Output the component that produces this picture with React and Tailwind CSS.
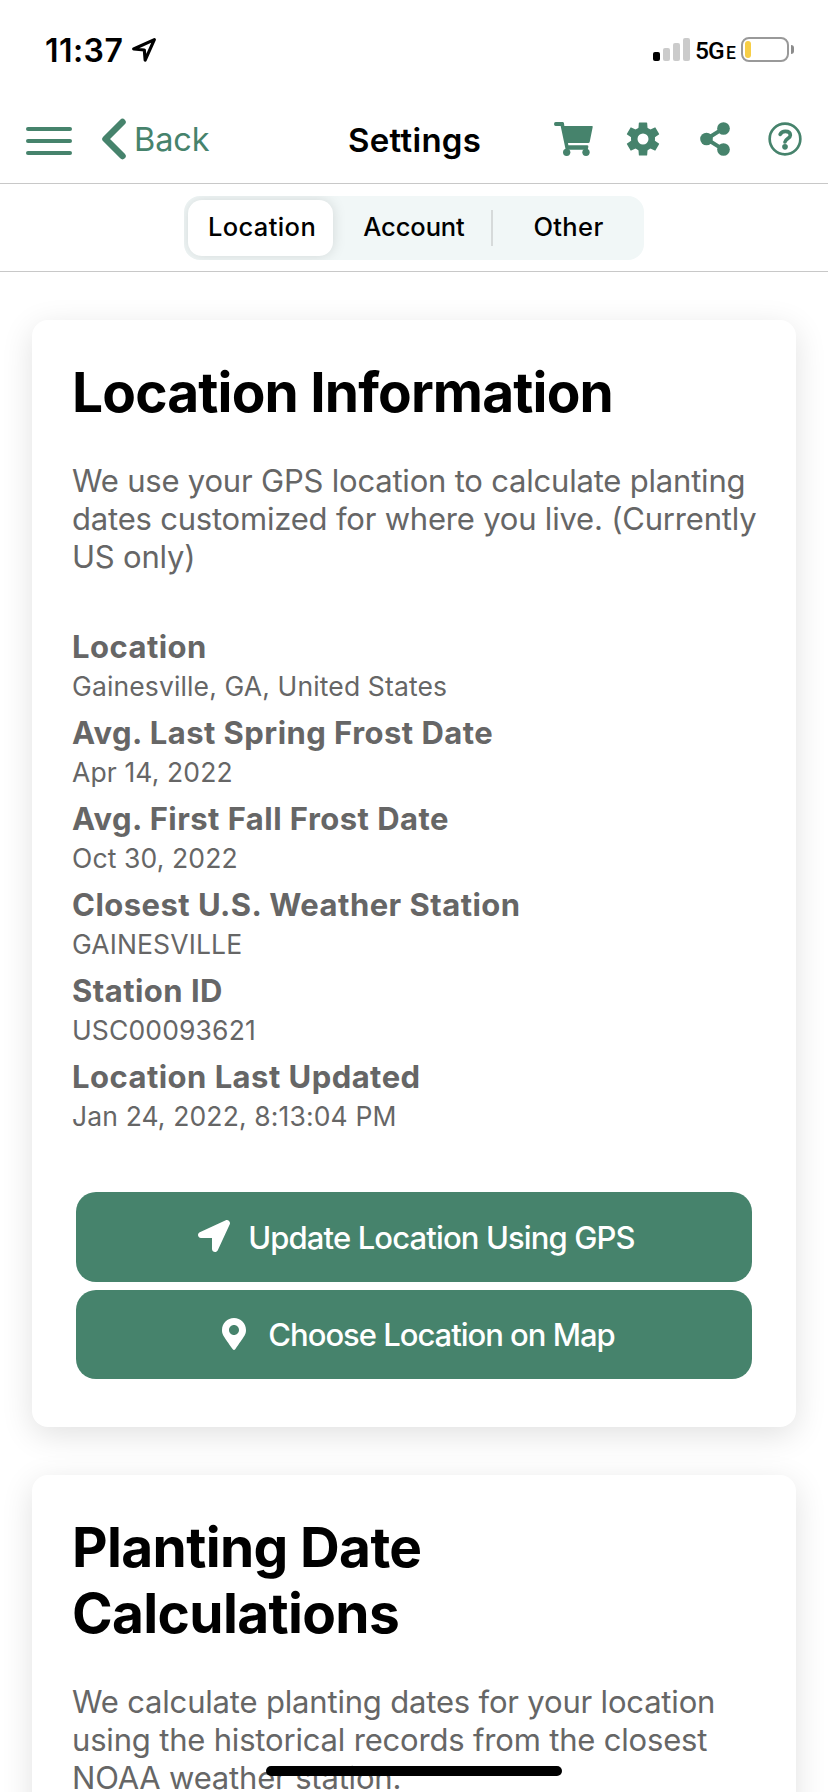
import React from "react";
import { FaLocationArrow, FaMapMarkerAlt } from "react-icons/fa";

const details = [
  ["Location", "Gainesville, GA, United States"],
  ["Avg. Last Spring Frost Date", "Apr 14, 2022"],
  ["Avg. First Fall Frost Date", "Oct 30, 2022"],
  ["Closest U.S. Weather Station", "GAINESVILLE"],
  ["Station ID", "USC00093621"],
  ["Location Last Updated", "Jan 24, 2022, 8:13:04 PM"],
];

function StatusBar() {
  return (
    <div className="flex h-[100px] shrink-0 items-start justify-between pt-[37px] pr-[34px] pl-[45px]">
      <div className="flex items-start">
        <span className="h-6 text-[32px] leading-[27px] font-semibold tracking-[0.44px]">11:37</span>
        <svg className="mt-px ml-[9px] h-6 w-6" viewBox="36 39 72 72" fill="none" stroke="black" strokeWidth="9.500" strokeLinejoin="round">
          <path d="M41 72L103 44L75.500 105.500L73 75Z" />
        </svg>
      </div>
      <div className="flex items-start">
        <div className="flex h-[24px] items-end gap-[3px]">
          <span className="h-[9px] w-[7px] rounded-[2px] bg-black" />
          <span className="h-[13px] w-[7px] rounded-[2px] bg-[#cbcbcb]" />
          <span className="h-[18px] w-[7px] rounded-[2px] bg-[#cbcbcb]" />
          <span className="h-[23px] w-[7px] rounded-[2px] bg-[#cbcbcb]" />
        </div>
        <div className="ml-[5px] flex w-[46px] items-baseline font-['Roboto'] leading-[27px] font-medium">
          <span className="w-[31px] text-[24.5px] tracking-[-0.8px]">5G</span>
          <span className="text-[17.5px]">E</span>
        </div>
        <div className="flex h-[25px] w-12 rounded-[8px] border-2 border-[#999] p-[2px]">
          <span className="w-[6px] rounded-[3px] bg-[#f7ce46]" />
        </div>
        <span className="mt-2 ml-[2px] h-[9px] w-[3px] rounded-r-full bg-[#8c8c8c]" />
      </div>
    </div>
  );
}

function CartIcon() {
  return (
    <svg className="h-[34px] w-[39px]" viewBox="42 51 117 102" fill="currentColor">
      <path d="M47 51H68Q71 51 72 55L73 63H156Q159 63 158 67L149 111Q148 114 145 114H84L85 121H142Q146 121 145 126L143 134H77L62 63H47Q42 63 42 57Q42 51 47 51Z" />
      <circle cx="80" cy="142" r="11" />
      <circle cx="138" cy="142" r="11" />
    </svg>
  );
}

function GearIcon() {
  return (
    <svg className="h-[34px] w-[34px]" viewBox="258.500 51 102 102" fill="currentColor">
      <path
        fillRule="evenodd"
        d="M309.500 66a36 36 0 1 0 0 72a36 36 0 1 0 0-72ZM309.500 85.500a16.500 16.500 0 1 1 0 33a16.500 16.500 0 1 1 0-33Z"
      />
      {[0, 60, 120, 180, 240, 300].map((a) => (
        <path key={a} transform={`rotate(${a} 309.500 102)`} d="M297 54Q297 52.500 299 52.500H320Q322 52.500 322 54L323.500 74H295.500Z" />
      ))}
    </svg>
  );
}

function ShareIcon() {
  return (
    <svg className="h-[34px] w-[30px]" viewBox="480.500 51 90 102" fill="currentColor">
      <path d="M551 70L500 102L551 134" fill="none" stroke="currentColor" strokeWidth="12" />
      <circle cx="551" cy="70.500" r="19" />
      <circle cx="500" cy="102" r="19" />
      <circle cx="551" cy="133.500" r="19" />
    </svg>
  );
}

function HelpIcon() {
  return (
    <svg className="h-[34px] w-[34px]" viewBox="685 51 102 102" fill="none" stroke="currentColor">
      <circle cx="736" cy="102" r="46" strokeWidth="8" />
      <path d="M721.500 88Q726 79 737 79C747 79 752 84 752 91C752 100 738 101 736 111" strokeWidth="11" strokeLinecap="round" />
      <circle cx="736" cy="125.500" r="8.500" fill="currentColor" stroke="none" />
    </svg>
  );
}

function NavBar() {
  return (
    <div className="grid h-[84px] shrink-0 grid-cols-[348px_1fr_274px] border-b border-[#c8c8c8] text-[#46836c]">
      <div className="flex items-start pt-[18px] pl-[26px]">
        <div className="mt-[9px] flex w-[46px] flex-col gap-2">
          <span className="h-1 rounded-full bg-[#46836c]" />
          <span className="h-1 rounded-full bg-[#46836c]" />
          <span className="h-1 rounded-full bg-[#46836c]" />
        </div>
        <svg className="ml-[29px] h-[42px] w-[25px]" viewBox="0 0 25 42" fill="none" stroke="currentColor" strokeWidth="6.500" strokeLinecap="round" strokeLinejoin="round">
          <path d="M21.500 4L4.500 21L21.500 38" />
        </svg>
        <span className="ml-2 pt-px text-[32.5px] leading-[42px] tracking-[-0.1px]">Back</span>
      </div>
      <h1 className="pt-[19px] text-[33px] leading-[42px] font-semibold tracking-[0.3px] text-black">Settings</h1>
      <div className="grid grid-cols-[72px_74px_68px_34px] items-start pt-[22px]">
        <CartIcon />
        <GearIcon />
        <ShareIcon />
        <HelpIcon />
      </div>
    </div>
  );
}

function Tabs() {
  return (
    <div className="flex h-[88px] shrink-0 justify-center border-b border-[#c8c8c8] pt-3">
      <div className="flex h-16 w-[460px] items-center overflow-hidden rounded-2xl bg-[#f1f7f7] pl-1 text-[25.5px] leading-[34px] font-medium">
        <div className="flex h-14 w-[145px] items-center justify-center rounded-[14px] bg-white pb-[3px] pl-[3px] tracking-[0.39px] shadow-[0_0_14px_rgba(0,0,0,0.13)]">Location</div>
        <div className="flex h-9 w-[160px] items-center justify-center border-r-2 border-[#d6dada] pb-[3px] pl-1 tracking-[-0.1px]">Account</div>
        <div className="flex h-9 flex-1 items-center justify-center pb-[3px] tracking-[0.35px]">Other</div>
      </div>
    </div>
  );
}

function Card({ children, className }) {
  return (
    <section className={`shrink-0 rounded-2xl bg-white px-[40px] pt-[39px] shadow-[0_8px_32px_rgba(0,0,0,0.12)] ${className}`}>
      {children}
    </section>
  );
}

export default function App() {
  return (
    <div className="relative flex h-[1792px] w-[828px] flex-col overflow-hidden bg-white font-['Inter',sans-serif] text-black">
      <StatusBar />
      <NavBar />
      <Tabs />
      <main className="flex flex-col gap-12 px-8 pt-12">
        <Card className="h-[1107px]">
          <h2 className="text-[55px] leading-[66px] font-bold tracking-[-0.84px]">Location Information</h2>
          <p className="mt-[37px] text-[31px] leading-[38px] tracking-[-0.2px] whitespace-nowrap text-[#666]">
            We use your GPS location to calculate planting
            <br />
            dates customized for where you live. (Currently
            <br />
            US only)
          </p>
          <dl className="mt-[52px] flex flex-col gap-2 text-[#666]">
            {details.map(([label, value]) => (
              <div key={label}>
                <dt className="text-[31px] leading-[38px] font-bold tracking-[0.46px]">{label}</dt>
                <dd className="text-[26.5px] leading-[40px] tracking-[0.13px]">{value}</dd>
              </div>
            ))}
          </dl>
          <div className="mx-1 mt-[56px] flex flex-col gap-2 text-[31px] leading-[38px] font-medium text-white">
            <button className="flex h-[90px] items-center justify-center gap-[18px] rounded-[20px] bg-[#46836c] pl-[5px]">
              <FaLocationArrow className="mb-[2px] h-8 w-8" />
              <span className="pt-px tracking-[-0.87px]">Update Location Using GPS</span>
            </button>
            <button className="flex h-[89px] items-center justify-center gap-[18px] rounded-[20px] bg-[#46836c] pl-[5px]">
              <FaMapMarkerAlt className="mb-px h-8 w-8" />
              <span className="tracking-[-1.02px]">Choose Location on Map</span>
            </button>
          </div>
        </Card>
        <Card className="h-[400px]">
          <h2 className="text-[55px] leading-[66px] font-bold tracking-[-0.64px]">
            Planting Date
            <br />
            Calculations
          </h2>
          <p className="mt-[37px] text-[31px] leading-[38px] tracking-[-0.18px] whitespace-nowrap text-[#666]">
            We calculate planting dates for your location
            <br />
            using the historical records from the closest
            <br />
            NOAA weather station.
          </p>
        </Card>
      </main>
      <div className="absolute top-[1766px] left-[266px] h-[10px] w-[296px] rounded-full bg-black" />
    </div>
  );
}
